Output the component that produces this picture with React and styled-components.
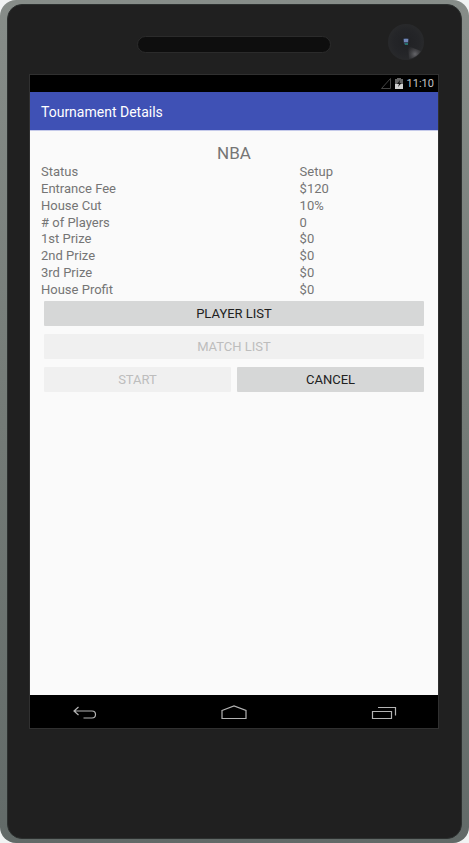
import React from "react";
import styled, { createGlobalStyle } from "styled-components";

const GlobalStyle = createGlobalStyle`
  * { box-sizing: border-box; }
  body {
    margin: 0;
    background: #f1f3f3;
    font-family: Roboto, "Liberation Sans", sans-serif;
  }
`;

const Device = styled.div`
  display: flex;
  min-height: 100vh;
  padding: 4px 7px;
  border-radius: 16px;
  background: linear-gradient(#878d89, #747b77 50%, #626a68);
`;

const Bezel = styled.div`
  flex: 1;
  display: flex;
  flex-direction: column;
  padding: 0 22px 109px 21px;
  border: 1px solid #2c302f;
  border-radius: 15px;
  background: #202020;
`;

const Hardware = styled.div`
  display: grid;
  grid-template-columns: 1fr 194px 1fr;
  align-items: center;
  height: 69px;
  padding-top: 9px;
`;

const Speaker = styled.div`
  grid-column: 2;
  height: 17px;
  border: 1px solid #2b2b2b;
  border-radius: 9px;
  background: #0e0e0e;
`;

const Lens = styled.svg`
  width: 36px;
  height: 36px;
  justify-self: end;
  margin: 0 15px 4px 0;
`;

const Screen = styled.div`
  flex: 1;
  display: flex;
  flex-direction: column;
  border: 1px solid #303030;
  background: #fafafa;
`;

const StatusBar = styled.div`
  display: flex;
  align-items: center;
  justify-content: flex-end;
  gap: 4px;
  height: 17px;
  padding-right: 4px;
  background: #000;
  color: #c4c4c4;
  font-size: 11px;
  line-height: 17px;
`;

const AppBar = styled.header`
  display: flex;
  align-items: center;
  height: 38px;
  padding: 2px 11px 0;
  background: #3f51b5;
  color: #fff;
`;

const AppTitle = styled.h1`
  margin: 0;
  font-size: 14px;
  font-weight: 400;
  line-height: 20px;
`;

const Content = styled.main`
  flex: 1;
  padding: 12px 11px;
  border-top: 1px solid #c5caea;
  color: #757575;
`;

const Name = styled.h2`
  margin: 0;
  font-size: 17px;
  font-weight: 400;
  line-height: 21px;
  text-align: center;
`;

const Details = styled.table`
  width: 100%;
  height: 134px;
  border-collapse: collapse;
  table-layout: fixed;
  font-size: 13px;
  line-height: 16px;
  text-align: left;
`;

const Label = styled.th`
  width: 67%;
  padding: 0;
  font-weight: 400;
`;

const Value = styled.td`
  padding: 0;
`;

const Actions = styled.div`
  display: grid;
  grid-template-columns: 1fr 1fr;
  gap: 8px 6px;
  padding: 3px;
`;

const Action = styled.button`
  grid-column: ${({ $wide }) => ($wide ? "1 / -1" : "auto")};
  height: 25px;
  padding: 0;
  border: 0;
  border-radius: 1px;
  background: #d6d7d7;
  color: #212121;
  font: 400 13px/25px Roboto, "Liberation Sans", sans-serif;
  text-transform: uppercase;

  &:disabled {
    background: #f0f0f0;
    color: #bdbdbd;
  }
`;

const NavBar = styled.nav`
  display: flex;
  align-items: center;
  justify-content: space-between;
  height: 33px;
  padding: 0 41px;
  background: #000;
`;

const NavButton = styled.button`
  display: flex;
  padding: 0;
  border: 0;
  background: none;
`;

const NavIcon = styled.svg`
  width: 28px;
  height: 18px;
  fill: none;
  stroke: #b4b4b4;
  stroke-width: 1.2;
`;

const rows = [
  ["Status", "Setup"],
  ["Entrance Fee", "$120"],
  ["House Cut", "10%"],
  ["# of Players", "0"],
  ["1st Prize", "$0"],
  ["2nd Prize", "$0"],
  ["3rd Prize", "$0"],
  ["House Profit", "$0"],
];

function CameraLens() {
  return (
    <Lens viewBox="0 0 36 36" aria-hidden="true">
      <defs>
        <radialGradient id="glass">
          <stop offset="0" stopColor="#202124" />
          <stop offset="0.7" stopColor="#242528" />
          <stop offset="1" stopColor="#28292b" />
        </radialGradient>
        <radialGradient
          id="glint"
          gradientUnits="userSpaceOnUse"
          cx="27"
          cy="30"
          r="10"
        >
          <stop offset="0" stopColor="#66666a" />
          <stop offset="1" stopColor="#3a3a3c" stopOpacity="0" />
        </radialGradient>
      </defs>
      <circle cx="18" cy="18" r="18" fill="url(#glass)" />
      <path d="M20 22 L33 27 A17 17 0 0 1 21 35 Z" fill="url(#glint)" />
      <path d="M15 15 Q18 13 21 15 L20 20 Q18 22 16 20 Z" fill="#39465f" />
      <path d="M16 15 h4 v3 h-4 z" fill="#7186b8" />
      <path d="M17 19 h3 v2 h-3 z" fill="#26716c" />
    </Lens>
  );
}

export default function App() {
  return (
    <>
      <GlobalStyle />
      <Device>
        <Bezel>
          <Hardware>
            <Speaker />
            <CameraLens />
          </Hardware>
          <Screen>
            <StatusBar>
              <svg width="10" height="11" viewBox="0 0 10 11" aria-hidden="true">
                <path d="M9.5 .5 V10.5 H.5 Z" fill="none" stroke="#444" />
              </svg>
              <svg width="8" height="11" viewBox="0 0 8 11" aria-hidden="true">
                <path d="M0 1 H2 V0 H6 V1 H8 V6 H0 Z" fill="#646464" />
                <path d="M0 6 H8 V11 H0 Z" fill="#d0d0d0" />
                <path d="M5 2 L2 6 H4 L3 9 L6.5 5 H4.5 Z" fill="#111" />
              </svg>
              <time>11:10</time>
            </StatusBar>
            <AppBar>
              <AppTitle>Tournament Details</AppTitle>
            </AppBar>
            <Content>
              <Name>NBA</Name>
              <Details>
                <tbody>
                  {rows.map(([label, value]) => (
                    <tr key={label}>
                      <Label scope="row">{label}</Label>
                      <Value>{value}</Value>
                    </tr>
                  ))}
                </tbody>
              </Details>
              <Actions>
                <Action type="button" $wide>Player List</Action>
                <Action type="button" $wide disabled>Match List</Action>
                <Action type="button" disabled>Start</Action>
                <Action type="button">Cancel</Action>
              </Actions>
            </Content>
            <NavBar>
              <NavButton type="button" aria-label="Back">
                <NavIcon viewBox="0 0 28 18">
                  <path d="M7.500 4 L3 8 L7.500 12 M3 8 H21 Q24.500 8 24.500 11.500 Q24.500 15 21 15 H12.500" />
                </NavIcon>
              </NavButton>
              <NavButton type="button" aria-label="Home">
                <NavIcon viewBox="0 0 28 18">
                  <path d="M2 7.500 L14 3 L26 7.500 V15.500 H2 Z" />
                </NavIcon>
              </NavButton>
              <NavButton type="button" aria-label="Recent apps">
                <NavIcon viewBox="0 0 28 18">
                  <path d="M3.500 8.500 H22.500 V15.500 H3.500 Z M9 4.500 H26.500 V12.500" />
                </NavIcon>
              </NavButton>
            </NavBar>
          </Screen>
        </Bezel>
      </Device>
    </>
  );
}
